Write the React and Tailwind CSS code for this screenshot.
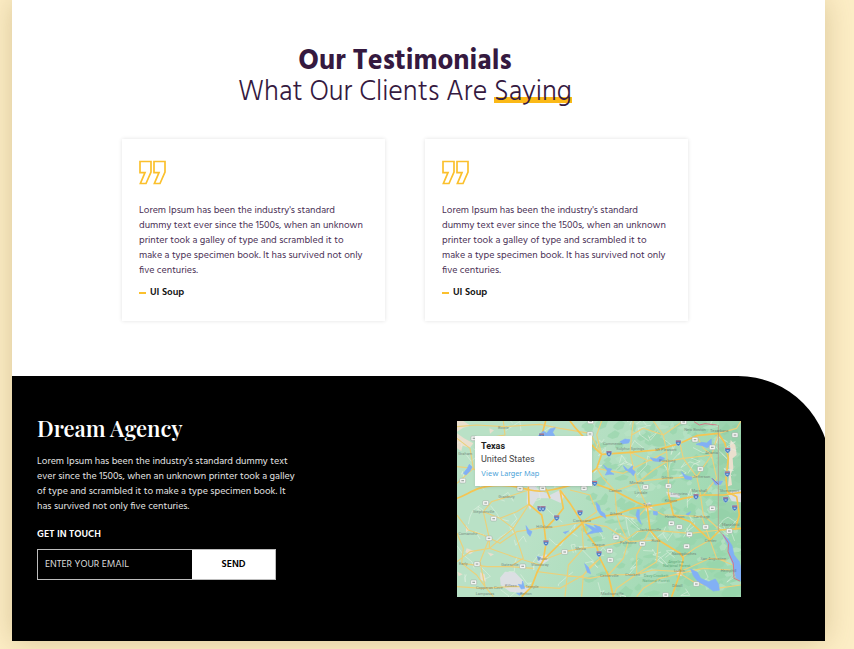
const QUOTE =
  "Lorem Ipsum has been the industry's standard dummy text ever since the 1500s, when an unknown printer took a galley of type and scrambled it to make a type specimen book. It has survived not only five centuries.";

const TESTIMONIALS = [
  { id: 1, author: "UI Soup" },
  { id: 2, author: "UI Soup" },
];

/* ---- map data, in a space of three units per pixel ---- */

const HIGHWAYS = [
  "M21 250 C60 235 80 215 130 212 S200 215 240 225 S330 220 380 205 L440 160 L455 118",
  "M370 210 L435 206 L495 228 L560 262 L592 275 L650 265 L700 250 L760 240 L820 240 L873 232",
  "M455 118 L540 112 L620 105 L690 85 L740 62 L805 55",
  "M455 118 C420 85 390 60 360 18",
  "M287 18 L275 62 L272 210 L290 225 L300 250",
  "M235 215 L237 268 L275 300 L283 340 L288 385 L280 435 L262 470 L245 515 L215 545",
  "M330 225 L340 280 L318 308 L287 340",
  "M330 225 L362 268 L395 320 L408 352 L440 395 L450 430 L475 480 L490 545",
  "M805 55 L825 85 L835 130 L828 190 L832 230 L860 245 L868 300 L855 345",
  "M280 435 L330 385 L400 322 L450 305 L500 298 L550 280 L592 275",
  "M592 275 L600 345 L625 375 L690 415 L700 430 L690 475 L665 545",
  "M655 235 L670 300 L720 320 L780 375 L810 345 L873 340",
];

const ROADS = [
  "M21 70 L60 100 L70 160 L21 205",
  "M21 35 L80 30 L160 35 L270 28 L330 40 L420 55 L455 118",
  "M21 300 L55 345 L100 360 L150 385 L200 350 L280 338",
  "M100 290 L125 260 L175 245 L235 225",
  "M21 440 L60 410 L118 400 L190 340 L237 268",
  "M118 370 L118 400 L190 425 L270 450",
  "M100 290 L118 370 L90 440 L105 515 L130 545",
  "M21 355 L40 400 L35 445 L80 480 L105 515",
  "M35 445 L110 455 L180 455 L250 460",
  "M21 515 L100 520 L180 515 L245 515 L330 520 L400 480 L450 430",
  "M180 455 L220 430 L190 340 L150 310 L100 290",
  "M287 340 L395 322 L470 335 L540 380 L620 375",
  "M280 435 L345 410 L395 400 L450 395 L520 380 L560 350 L600 345",
  "M395 322 L400 400 L355 450 L345 545",
  "M262 470 L340 480 L420 490 L475 480 L560 478 L610 465 L690 470 L780 430 L830 435",
  "M475 480 L520 430 L535 380 L510 330 L500 298 L495 228 L460 190 L440 160",
  "M455 118 L440 60 L455 18",
  "M440 160 L520 175 L600 135 L650 110 L640 60 L700 18",
  "M540 112 L545 60 L580 40 L640 60",
  "M540 112 L560 200 L575 240 L592 275",
  "M540 112 L590 135 L650 140 L700 130 L785 120 L805 55",
  "M650 110 L655 190 L655 235",
  "M560 200 L650 190 L740 185 L785 120",
  "M495 228 L560 205 L610 165 L650 140",
  "M750 230 L740 185 L700 130 L690 85",
  "M750 230 L760 300 L810 345",
  "M592 275 L640 300 L670 300 L755 305 L780 375",
  "M600 345 L660 350 L720 355 L810 345",
  "M600 345 L560 420 L560 478 L500 520 L490 545",
  "M700 425 L735 400 L780 375 L800 430 L873 460",
  "M690 475 L760 460 L840 465",
  "M690 475 L730 500 L800 520 L873 510",
  "M690 475 L630 490 L580 520 L560 545",
  "M21 155 L70 160 L130 212",
  "M160 18 L165 60 L75 75",
  "M560 478 L620 440 L625 375",
  "M360 225 L420 240 L440 290 L395 322",
  "M237 268 L200 290 L150 310",
  "M740 62 L760 100 L785 120 L800 190 L760 240",
  "M805 55 L860 40 L873 18",
  "M550 18 L545 60",
  "M640 60 L610 18",
  "M592 275 L560 310 L500 298",
  "M450 430 L420 455 L400 480 L395 545",
];

const LAKES = [
  "M265 62 L280 48 L290 55 L300 42 L316 38 L308 52 L314 62Z",
  "M40 175 L52 160 L58 148 L66 156 L60 168 L48 180Z",
  "M510 80 L525 72 L540 74 L536 84 L518 86Z",
  "M460 150 L472 160 L485 162 L480 170 L492 178 L478 178 L466 180 L472 168Z",
  "M520 152 L534 164 L548 152 L546 162 L556 170 L550 182 L540 172 L526 164Z",
  "M600 128 L620 132 L630 124 L644 130 L630 140 L610 138Z",
  "M738 88 L755 82 L770 84 L784 72 L784 90 L772 98 L756 92Z",
  "M694 170 L708 182 L726 186 L724 194 L706 192Z",
  "M786 190 L796 200 L818 198 L812 208 L796 210Z",
  "M438 262 L448 272 L452 288 L464 296 L468 310 L452 300 L442 284Z",
  "M406 328 L424 334 L440 342 L432 330 L450 336 L458 350 L440 352 L410 358 L428 346Z",
  "M562 284 L568 284 L568 308 L574 328 L564 316 L558 300Z",
  "M228 332 L236 344 L246 350 L240 364 L232 354Z",
  "M404 446 L416 458 L422 476 L412 472Z",
  "M205 508 L216 510 L218 498 L224 520 L214 522Z",
  "M722 462 L742 472 L752 490 L776 500 L796 492 L806 508 L808 526 L790 528 L770 514 L744 500 L730 482Z",
  "M818 358 L834 372 L846 392 L852 420 L868 440 L873 462 L873 498 L858 488 L850 452 L838 420 L834 390Z",
  "M262 424 L272 428 L266 438Z",
  "M610 288 L622 290 L622 300 L611 299Z",
  "M708 298 L722 290 L716 300Z",
  "M200 535 L216 534 L208 541Z",
  "M340 352 L356 348 L346 356Z",
];

const URBAN = [
  "M165 470 L195 472 L222 500 L215 512 L240 520 L225 535 L180 530 L152 510 L150 488Z",
  "M232 212 L250 205 L262 222 L300 240 L330 225 L345 238 L332 264 L300 250 L262 250 L240 285 L230 262Z",
  "M268 425 L290 418 L296 436 L278 448 L262 440Z",
  "M830 232 L873 225 L873 262 L845 258Z",
  "M580 268 L600 262 L608 280 L590 290Z",
  "M648 230 L688 236 L690 248 L655 245Z",
  "M680 465 L700 470 L694 484 L680 480Z",
];

const SAND = [
  "M21 55 L42 70 L70 85 L60 98 L38 92 L34 108 L21 100Z",
  "M21 18 L40 18 L62 32 L40 38 L21 50Z",
  "M118 40 L132 46 L120 56Z",
  "M842 75 L856 90 L860 120 L848 130 L850 160 L842 178 L846 210 L834 214 L838 170 L836 130Z",
  "M48 330 L58 345 L48 352Z",
  "M50 400 L74 408 L60 418 L46 412Z",
  "M90 472 L104 478 L108 500 L92 494Z",
  "M112 412 L132 418 L122 424Z",
  "M22 470 L38 478 L26 484Z",
];

const SHIELDS = [
  [275, 62], [477, 115], [685, 83], [833, 105], [832, 176], [434, 204], [738, 244], [827, 253],
  [854, 278], [270, 280], [279, 280], [320, 308], [390, 293], [288, 383], [447, 416],
];

const BADGES = [
  [420, 57], [38, 197], [107, 264], [131, 311], [117, 370], [210, 221], [278, 220], [402, 220],
  [587, 216], [655, 213], [751, 162], [787, 97], [735, 74], [855, 60], [787, 280], [664, 325],
  [688, 336], [718, 358], [767, 336], [838, 348], [498, 367], [577, 386], [710, 394], [479, 407],
  [481, 435], [344, 411], [218, 454], [81, 447], [71, 502], [739, 507], [647, 540], [701, 21],
  [422, 19], [72, 70],
];

const CITIES = [
  ["Stephenville", 101, 289], ["Granbury", 170, 246], ["Bowie", 160, 37], ["Graham", 46, 115],
  ["Corsicana", 396, 317], ["Hillsboro", 283, 336], ["Waco", 277, 430], ["Woodway", 270, 449],
  ["Gatesville", 180, 449], ["Killeen", 183, 512], ["Temple", 246, 515], ["Belton", 228, 535],
  ["Copperas Cove", 118, 518], ["Lampasas", 105, 535], ["Comanche", 54, 357], ["Early", 40, 445],
  ["Mexia", 392, 400], ["Teague", 445, 390], ["Athens", 498, 297], ["Canton", 496, 227],
  ["Tyler", 592, 268], ["Longview", 688, 236], ["Kilgore", 663, 257], ["Marshall", 748, 227],
  ["Henderson", 674, 306], ["Carthage", 755, 305], ["Jacksonville", 600, 345], ["Palestine", 535, 382],
  ["Rusk", 618, 378], ["Center", 782, 378], ["Nacogdoches", 702, 415], ["Lufkin", 688, 468],
  ["San Augustine", 790, 431], ["Crockett", 548, 478], ["Centerville", 478, 483], ["Diboll", 682, 512],
  ["Madisonville", 487, 535], ["Hemphill", 836, 466], ["Commerce", 488, 87], ["Sulphur Springs", 541, 102],
  ["Mt Pleasant", 648, 103], ["Pittsburg", 652, 137], ["Gilmer", 652, 188], ["Jefferson", 755, 184],
  ["Atlanta", 785, 114], ["New Boston", 735, 43], ["Texarkana", 808, 48], ["Mineola", 560, 204],
  ["Lindale", 573, 234], ["Shreveport", 838, 228], ["Mansfield", 842, 328],
];

function series(seed, count, make) {
  let s = seed;
  const next = () => {
    s = (s * 16807) % 2147483647;
    return s / 2147483647;
  };
  return Array.from({ length: count }, () => make(next));
}

const WOODS = series(41, 190, (r) => {
  const x = 873 - Math.pow(r(), 1.5) * 480;
  const y = 18 + r() * 527;
  const w = 8 + r() * 22;
  const h = 5 + r() * 14;
  return `M${x} ${y} l${w} ${-h} l${w * 0.7} ${h * 0.6} l${-w * 0.3} ${h} l${-w * 0.8} ${h * 0.4} l${-w * 0.7} ${-h * 0.5}Z`;
});

const CLEARINGS = series(97, 80, (r) => {
  const x = 480 + r() * 380;
  const y = 18 + r() * 527;
  const w = 6 + r() * 16;
  const h = 4 + r() * 9;
  return `M${x} ${y} l${w} ${-h} l${w} ${h * 0.8} l${-w * 0.6} ${h} l${-w} ${h * 0.2}Z`;
});

const LANES = series(13, 90, (r) => {
  const x = 21 + r() * 852;
  const y = 18 + r() * 527;
  const step = () => (r() - 0.5) * 60;
  return `M${x} ${y} l${step()} ${step()} l${step()} ${step()} l${step()} ${step()}`;
});

function TexasMap() {
  return (
    <svg viewBox="21 18 852 528" className="block w-full" role="img" aria-label="Map of Texas">
      <defs>
        <linearGradient id="land" x1="0" x2="1" y1="0" y2="0.25">
          <stop offset="0.4" stopColor="#b9e1c6" />
          <stop offset="1" stopColor="#9fd9b1" />
        </linearGradient>
      </defs>
      <rect x="21" y="18" width="852" height="528" fill="url(#land)" />
      <path d={WOODS.join("")} fill="#94d3a8" opacity="0.6" />
      <path d={CLEARINGS.join("")} fill="#b9e3c6" opacity="0.7" />
      <path d="M808 18 H873 V345 H808Z" fill="#8fc9a2" opacity="0.35" />
      <path d={SAND.join("")} fill="#eadfce" />
      <path d={URBAN.join("")} fill="#dcdfe3" />
      <path d={LANES.join("")} fill="none" stroke="#e4f2e4" strokeWidth="2" opacity="0.8" />
      <path d={ROADS.join("")} fill="none" stroke="#ecd07a" strokeWidth="3.4" strokeLinejoin="round" />
      <path d={HIGHWAYS.join("")} fill="none" stroke="#f5c552" strokeWidth="5" strokeLinejoin="round" />
      <path d={LAKES.join("")} fill="#82b0f5" stroke="#82b0f5" strokeWidth="2" />
      <path d="M732 20 L748 30 L765 26 L800 30 M818 358 L836 385 L834 410 L850 445 L852 490 L870 498" fill="none" stroke="#d2798a" strokeWidth="3" />
      <path d="M805 30 V345 L818 358" fill="none" stroke="#b39a87" strokeWidth="2.4" />
      <path d="M786 190 L796 200 L806 208" fill="none" stroke="#8c6fa0" strokeWidth="3" />
      {BADGES.map(([x, y]) => (
        <g key={`b${x}-${y}`}>
          <rect x={x - 9} y={y - 7} width="18" height="14" rx="3" fill="#f3f6f3" stroke="#9fa8a2" strokeWidth="1.6" />
          <path d={`M${x - 4} ${y}h8`} stroke="#a3aba6" strokeWidth="4" />
        </g>
      ))}
      {SHIELDS.map(([x, y]) => (
        <g key={`s${x}-${y}`}>
          <path d={`M${x - 8} ${y - 7}h16v8q-1 6-8 9q-7-3-8-9z`} fill="#4b7fc4" stroke="#dce8ee" strokeWidth="1" />
          <path d={`M${x - 7} ${y - 6}h14v3h-14z`} fill="#c9737c" />
          <path d={`M${x - 3} ${y + 2}h6`} stroke="#a9c4ea" strokeWidth="4" />
        </g>
      ))}
      <g fill="#66736b" opacity="0.75" fontSize="12" textAnchor="middle" className="font-['Roboto',sans-serif]">
        {CITIES.map(([name, x, y]) => (
          <text key={name} x={x} y={y + 4}>{name}</text>
        ))}
        <g fill="#4f9a6c">
          <text x="678" y="443">Angelina</text>
          <text x="680" y="457">National Forest</text>
          <text x="618" y="486">Davy Crockett</text>
          <text x="618" y="500">National Forest</text>
        </g>
      </g>
    </svg>
  );
}

function QuoteMark() {
  return (
    <svg viewBox="0 0 27 25" className="block h-[25px] w-[27px]" fill="none" stroke="#fbc02d" strokeWidth="1.7" aria-hidden="true">
      <path d="M1 1.5 H12 V12 L7 23.5 H1.4 L6 12.6 H1Z" />
      <path d="M15 1.5 H26 V12 L21 23.5 H15.4 L20 12.6 H15Z" />
    </svg>
  );
}

function TestimonialCard({ author }) {
  return (
    <article className="bg-white px-[17px] pt-[21px] pb-[21px] shadow-[0_0_4px_rgba(0,0,0,0.12)]">
      <QuoteMark />
      <p className="mt-[18px] text-[10px] leading-[15px] text-[#4a3055]">{QUOTE}</p>
      <p className="mt-[7px] flex items-center gap-1 text-[10px] leading-[15px] font-semibold text-[#111]">
        <span className="h-[2px] w-[7px] bg-[#fbc02d]" />
        {author}
      </p>
    </article>
  );
}

export default function App() {
  return (
    <div className="min-h-screen overflow-hidden bg-[#fdeec6] pr-[29px] pb-2 pl-3 font-['Hind','Noto_Sans',sans-serif]">
      <div className="shadow-[0_0_28px_rgba(110,80,20,0.25)]">
        <main className="overflow-hidden bg-white">
          <section className="pt-[46px] pr-[27px] pb-[55px]">
            <h2 className="text-center text-[28px] leading-[31px] font-light text-[#35193f]">
              <strong className="block font-bold">Our Testimonials</strong>
              What Our Clients Are{" "}
              <span className="bg-[linear-gradient(#fbb917,#fbb917)] bg-[length:100%_6px] bg-[position:0_70%] bg-no-repeat">
                Saying
              </span>
            </h2>
            <div className="mx-auto mt-[31px] grid max-w-[566px] grid-cols-2 gap-10">
              {TESTIMONIALS.map((t) => (
                <TestimonialCard key={t.id} author={t.author} />
              ))}
            </div>
          </section>

          <footer className="-mr-[5px] flex items-start justify-between rounded-tr-[92px] bg-black pt-[45px] pr-[89px] pb-11 pl-[25px] text-white">
            <div className="w-[258px]">
              <h3 className="font-['Playfair_Display','Liberation_Serif',serif] text-[22px] leading-[15px] font-semibold">
                Dream Agency
              </h3>
              <p className="mt-[18px] text-[10px] leading-[15px] text-[#e4e4e4]">{QUOTE}</p>
              <form className="mt-[13px]" onSubmit={(e) => e.preventDefault()}>
                <label htmlFor="email" className="block text-[10px] leading-[15px] font-semibold uppercase">
                  Get in touch
                </label>
                <div className="mt-[7px] flex h-[31px] w-[239px] border border-[#bdbdbd]">
                  <input
                    id="email"
                    type="email"
                    placeholder="ENTER YOUR EMAIL"
                    className="w-[154px] bg-black px-[7px] text-[10px] text-white outline-none placeholder:text-[#dcdcdc]"
                  />
                  <button type="submit" className="flex-1 bg-white text-[10px] font-semibold text-black">
                    SEND
                  </button>
                </div>
              </form>
            </div>

            <div className="relative w-[284px]">
              <TexasMap />
              <div className="absolute top-[15px] left-[18px] h-[50px] w-[117px] bg-white px-[6px] pt-[4px] font-['Roboto',sans-serif] text-[9px] leading-[13px] text-[#444] shadow-sm">
                <p className="font-bold text-[#222]">Texas</p>
                <p>United States</p>
                <a href="#map" className="block font-['Hind','Noto_Sans',sans-serif] text-[8px] leading-4 text-[#4a9fd8]">
                  View Larger Map
                </a>
              </div>
            </div>
          </footer>
        </main>
      </div>
    </div>
  );
}
